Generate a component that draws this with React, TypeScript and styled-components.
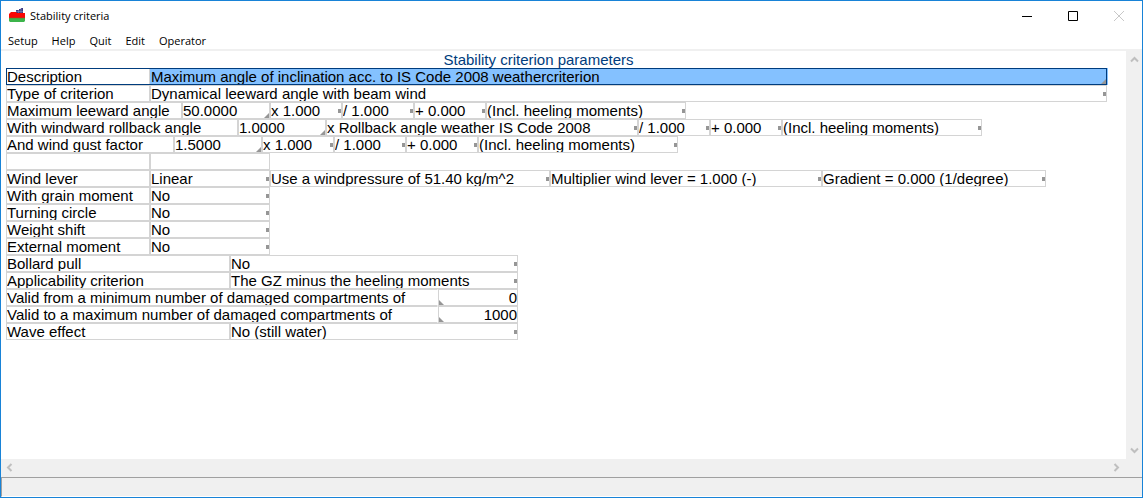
import React from "react";
import styled, { createGlobalStyle, css } from "styled-components";

const LINE = "#d4d4d4";
const NAVY = "#003c7d";
const SELECTED = "#84c1ff";
const CHROME = "#f0f0f0";
const ACCENT = "#1883d7";

const GlobalStyle = createGlobalStyle`
  *, *::before, *::after { box-sizing: border-box; }
  body { margin: 0; background: #fff; }
`;

const Window = styled.div`
  min-height: 100vh;
  display: flex;
  flex-direction: column;
  background: #fff;
  border: 1px solid ${ACCENT};
  color: #000;
  font-family: "Liberation Sans", Arial, sans-serif;
  font-size: 15px;
`;

const TitleBar = styled.header`
  height: 29px;
  display: flex;
  align-items: center;
  padding-left: 8px;
  font: 11px "Open Sans", "Segoe UI", sans-serif;
`;

const AppName = styled.h1`
  margin: 0 auto 0 5px;
  font: inherit;
`;

const CaptionButton = styled.button`
  width: 46px;
  height: 29px;
  padding: 0;
  border: 0;
  background: none;
  display: grid;
  place-items: center;
  color: #000;
  &:disabled { color: #c8c8c8; }
`;

const MenuBar = styled.nav`
  height: 21px;
  display: flex;
  align-items: center;
  gap: 14px;
  padding: 2px 0 0 7px;
  border-bottom: 2px solid ${CHROME};
`;

const MenuItem = styled.button`
  padding: 0;
  border: 0;
  background: none;
  color: #000;
  font: 11px "Open Sans", "Segoe UI", sans-serif;
`;

const Workspace = styled.div`
  flex: 1;
  display: flex;
`;

const Sheet = styled.main`
  flex: 1;
  min-width: 0;
  padding: 0 19px 0 5px;
`;

const SheetTitle = styled.h2`
  margin: 0;
  padding-right: 36px;
  font-size: 15px;
  font-weight: 400;
  line-height: 17px;
  text-align: center;
  color: ${NAVY};
`;

const Row = styled.div<{ $selected?: boolean }>`
  display: flex;
  height: 17px;
  ${(p) =>
    p.$selected &&
    css`
      outline: 1px solid ${NAVY};
      outline-offset: -1px;
      background: ${SELECTED};
      box-shadow: 1px 0 0 ${SELECTED};
    `}
`;

const cell = css<{ $w?: number }>`
  height: 17px;
  ${(p) => (p.$w ? `flex: 0 0 ${p.$w}px;` : "flex: 1;")}
  min-width: 0;
  border: 1px solid ${LINE};
  overflow: hidden;
  white-space: nowrap;
  line-height: 15px;
`;

const Label = styled.label<{ $w?: number; $open?: boolean }>`
  ${cell}
  background: #fff;
  ${(p) => p.$open && "border-right-color: #fff;"}
`;

const Popup = styled.button<{ $w?: number }>`
  ${cell}
  display: flex;
  align-items: center;
  padding: 0;
  background: none;
  color: inherit;
  font: inherit;
  line-height: 15px;
  text-align: left;
`;

const PopupText = styled.span`
  flex: 1;
`;

const Dot = styled.i`
  width: 3px;
  height: 4px;
  background: #969696;
`;

const Field = styled.span<{ $w?: number; $left?: boolean; $bare?: boolean }>`
  ${cell}
  position: relative;
  display: flex;
  ${(p) => p.$bare && "border-color: transparent;"}
  &::after {
    content: "";
    position: absolute;
    bottom: 0;
    ${(p) => (p.$left ? "left: 0;" : "right: 0;")}
    width: 5px;
    height: 5px;
    background: #969696;
    clip-path: ${(p) => (p.$left ? "polygon(0 0, 100% 100%, 0 100%)" : "polygon(100% 0, 100% 100%, 0 100%)")};
  }
`;

const Input = styled.input<{ $right?: boolean }>`
  flex: 1;
  min-width: 0;
  width: 100%;
  height: 15px;
  padding: 0;
  border: 0;
  outline: 0;
  background: none;
  color: inherit;
  font: inherit;
  line-height: 15px;
  text-align: ${(p) => (p.$right ? "right" : "left")};
`;

const ScrollColumn = styled.div`
  flex: 0 0 16px;
  display: flex;
  flex-direction: column;
  justify-content: space-between;
  background: ${CHROME};
`;

const ScrollRow = styled.div`
  height: 18px;
  display: flex;
  justify-content: space-between;
  padding-right: 18px;
  background: ${CHROME};
`;

const ScrollButton = styled.button`
  width: 16px;
  height: 17px;
  padding: 0;
  border: 0;
  background: none;
  color: #bfbfbf;
  display: grid;
  place-items: center;
`;

const StatusBar = styled.footer`
  height: 20px;
  border: solid #a0a0a0;
  border-width: 1px 0 0 1px;
  border-bottom: 1px solid #fff;
  background: ${CHROME};
`;

const arrows = {
  up: "M1 6.5 L4.5 3 L8 6.5",
  down: "M1 2.5 L4.5 6 L8 2.5",
  left: "M6.5 1 L3 4.5 L6.5 8",
  right: "M2.5 1 L6 4.5 L2.5 8",
};

const Arrow = ({ to }: { to: keyof typeof arrows }) => (
  <ScrollButton aria-label={`Scroll ${to}`}>
    <svg width="9" height="9" viewBox="0 0 9 9">
      <path d={arrows[to]} fill="none" stroke="currentColor" strokeWidth="2" />
    </svg>
  </ScrollButton>
);

type Cell = { kind: "popup" | "field" | "number"; text: string; w?: number };
type Line = { label: string; w: number; cells: Cell[]; selected?: boolean };

const popup = (text: string, w?: number): Cell => ({ kind: "popup", text, w });
const field = (text: string, w?: number): Cell => ({ kind: "field", text, w });
const number = (text: string, w?: number): Cell => ({ kind: "number", text, w });

const factors = [popup("/ 1.000", 72), popup("+ 0.000", 72), popup("(Incl. heeling moments)", 200)];

const top: Line[] = [
  { label: "Description", w: 144, selected: true, cells: [field("Maximum angle of inclination acc. to IS Code 2008 weathercriterion")] },
  { label: "Type of criterion", w: 144, cells: [popup("Dynamical leeward angle with beam wind")] },
  { label: "Maximum leeward angle", w: 176, cells: [field("50.0000", 88), popup("x 1.000", 72), ...factors] },
  { label: "With windward rollback angle", w: 232, cells: [field("1.0000", 88), popup("x Rollback angle weather IS Code 2008", 312), ...factors] },
  { label: "And wind gust factor", w: 168, cells: [field("1.5000", 88), popup("x 1.000", 72), ...factors] },
];

const bottom: Line[] = [
  {
    label: "Wind lever",
    w: 144,
    cells: [
      popup("Linear", 120),
      popup("Use a windpressure of 51.40 kg/m^2", 280),
      popup("Multiplier wind lever = 1.000 (-)", 272),
      popup("Gradient = 0.000 (1/degree)", 224),
    ],
  },
  { label: "With grain moment", w: 144, cells: [popup("No", 120)] },
  { label: "Turning circle", w: 144, cells: [popup("No", 120)] },
  { label: "Weight shift", w: 144, cells: [popup("No", 120)] },
  { label: "External moment", w: 144, cells: [popup("No", 120)] },
  { label: "Bollard pull", w: 224, cells: [popup("No", 288)] },
  { label: "Applicability criterion", w: 224, cells: [popup("The GZ minus the heeling moments", 288)] },
  { label: "Valid from a minimum number of damaged compartments of", w: 432, cells: [number("0", 80)] },
  { label: "Valid to a maximum number of damaged compartments of", w: 432, cells: [number("1000", 80)] },
  { label: "Wave effect", w: 224, cells: [popup("No (still water)", 288)] },
];

const CriterionRow = ({ line }: { line: Line }) => {
  const id = line.label.toLowerCase().replace(/ /g, "-");
  return (
    <Row $selected={line.selected}>
      <Label htmlFor={id} $w={line.w} $open={line.cells[0].kind === "number"}>
        {line.label}
      </Label>
      {line.cells.map((c, i) => {
        const cellId = i === 0 ? id : undefined;
        return c.kind === "popup" ? (
          <Popup key={i} id={cellId} $w={c.w} type="button">
            <PopupText>{c.text}</PopupText>
            <Dot />
          </Popup>
        ) : (
          <Field key={i} $w={c.w} $left={c.kind === "number"} $bare={line.selected}>
            <Input id={cellId} defaultValue={c.text} $right={c.kind === "number"} />
          </Field>
        );
      })}
    </Row>
  );
};

const ShipIcon = () => (
  <svg width="16" height="16" viewBox="0 0 16 16" aria-hidden="true">
    <path d="M7 2h3V1h2V0h2v5H7z" fill="#3c3c82" />
    <path d="M7 3.5h7M9.5 2v3M12 0v5" stroke="#8c8cbe" strokeWidth=".6" />
    <path d="M1 5l1-1h5l1 1h6l2 0v5H0V6z" fill="#fa0505" />
    <path d="M0 10h16v3l-1 1H1l-1-1z" fill="#3cb44b" />
    <path d="M0 10h16" stroke="#8c5a28" strokeWidth=".6" />
  </svg>
);

export default function App() {
  return (
    <Window>
      <GlobalStyle />
      <TitleBar>
        <ShipIcon />
        <AppName>Stability criteria</AppName>
        <CaptionButton aria-label="Minimize">
          <svg width="10" height="10"><path d="M0 5.5h10" stroke="currentColor" /></svg>
        </CaptionButton>
        <CaptionButton aria-label="Maximize">
          <svg width="10" height="10"><path d="M.5.5h9v9h-9z" fill="none" stroke="currentColor" /></svg>
        </CaptionButton>
        <CaptionButton aria-label="Close" disabled>
          <svg width="10" height="10"><path d="M0 0l10 10M10 0L0 10" stroke="currentColor" /></svg>
        </CaptionButton>
      </TitleBar>
      <MenuBar>
        {["Setup", "Help", "Quit", "Edit", "Operator"].map((m) => (
          <MenuItem key={m}>{m}</MenuItem>
        ))}
      </MenuBar>
      <Workspace>
        <Sheet>
          <SheetTitle>Stability criterion parameters</SheetTitle>
          {top.map((l) => <CriterionRow key={l.label} line={l} />)}
          <Row>
            <Label as="span" $w={144} />
            <Label as="span" $w={120} />
          </Row>
          {bottom.map((l) => <CriterionRow key={l.label} line={l} />)}
        </Sheet>
        <ScrollColumn>
          <Arrow to="up" />
          <Arrow to="down" />
        </ScrollColumn>
      </Workspace>
      <ScrollRow>
        <Arrow to="left" />
        <Arrow to="right" />
      </ScrollRow>
      <StatusBar />
    </Window>
  );
}
